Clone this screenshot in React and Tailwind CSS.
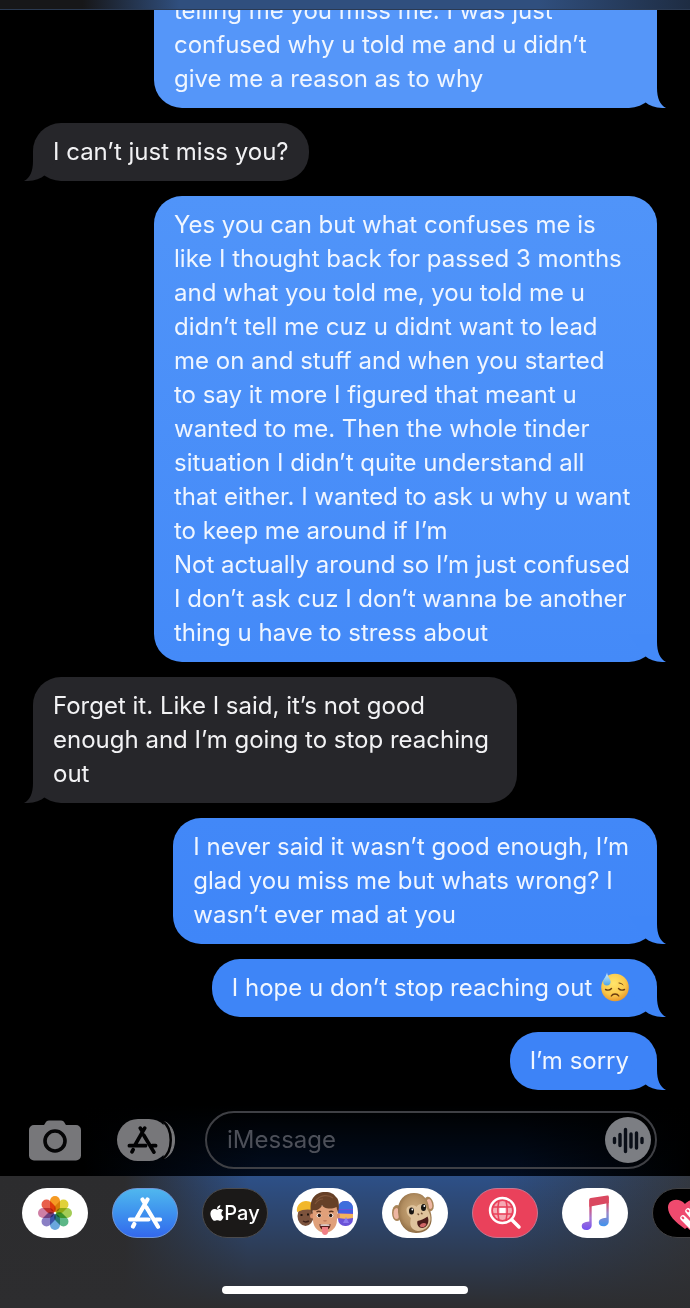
import React from 'react';
import { FaApple } from 'react-icons/fa';

const messages = [
  {
    id: 1,
    mine: true,
    color: 'bg-[#5596f9] text-[#5596f9]',
    size: 'w-full px-5',
    text: 'telling me you miss me. I was just\nconfused why u told me and u didn’t\ngive me a reason as to why',
  },
  {
    id: 2,
    mine: false,
    color: 'bg-[#26262a] text-[#26262a]',
    size: 'px-5',
    text: 'I can’t just miss you?',
  },
  {
    id: 3,
    mine: true,
    color: 'bg-linear-to-b from-[#5094f9] to-[#448af8] text-[#448af8]',
    size: 'w-full px-5',
    text: 'Yes you can but what confuses me is\nlike I thought back for passed 3 months\nand what you told me, you told me u\ndidn’t tell me cuz u didnt want to lead\nme on and stuff and when you started\nto say it more I figured that meant u\nwanted to me. Then the whole tinder\nsituation I didn’t quite understand all\nthat either. I wanted to ask u why u want\nto keep me around if I’m\nNot actually around so I’m just confused\nI don’t ask cuz I don’t wanna be another\nthing u have to stress about',
  },
  {
    id: 4,
    mine: false,
    color: 'bg-[#26262a] text-[#26262a]',
    size: 'pl-5 pr-7',
    text: 'Forget it. Like I said, it’s not good\nenough and I’m going to stop reaching\nout',
  },
  {
    id: 5,
    mine: true,
    color: 'bg-linear-to-b from-[#4288f8] to-[#3f86f8] text-[#3f86f8]',
    size: 'pl-5 pr-7',
    text: 'I never said it wasn’t good enough, I’m\nglad you miss me but whats wrong? I\nwasn’t ever mad at you',
  },
  {
    id: 6,
    mine: true,
    color: 'bg-[#3e85f7] text-[#3e85f7]',
    size: 'pl-5 pr-7',
    text: 'I hope u don’t stop reaching out ',
    emoji: true,
  },
  { id: 7, mine: true, color: 'bg-[#3d83f7] text-[#3d83f7]', size: 'pl-5 pr-7', text: 'I’m sorry' },
];

const SweatEmoji = () => (
  <svg role="img" aria-label="downcast face with sweat" viewBox="0 0 30 30" className="-mt-1 inline-block size-[30px] align-middle">
    <defs>
      <radialGradient id="face" cx="45%" cy="35%" r="65%">
        <stop offset="0" stopColor="#ffe56b" />
        <stop offset="0.65" stopColor="#fbc84a" />
        <stop offset="1" stopColor="#e99a2d" />
      </radialGradient>
      <linearGradient id="drop" x1="0" y1="0" x2="0" y2="1">
        <stop offset="0" stopColor="#d8f1ff" />
        <stop offset="1" stopColor="#4aa5ea" />
      </linearGradient>
    </defs>
    <circle cx="16" cy="15.5" r="13.8" fill="url(#face)" />
    <g fill="none" stroke="#6a3d10" strokeLinecap="round" strokeWidth="1.4">
      <path d="M6.5 17.5c2.200 1 4.600.5 6-1M19.500 16.500c1.400 1.500 3.800 2 6 1" />
      <path d="M12.300 24c1.500-2.600 6-2.600 7.500 0" />
      <path d="M20 11c1.800.2 3 .8 4 1.800" strokeWidth="1" />
    </g>
    <path d="M8 .5C8.300 4 11.600 7 11.600 9.800a3.700 3.700 0 0 1-7.400 0C4.200 7 7.600 4 8 .5z" fill="url(#drop)" />
  </svg>
);

const Bubble = ({ message }) => (
  <li
    className={`relative max-w-[503px] shrink-0 rounded-[28px] py-3 ${message.color} ${message.size} ${
      message.mine ? 'self-end' : 'self-start'
    }`}
  >
    <svg
      viewBox="0 0 38 28"
      aria-hidden="true"
      className={`absolute bottom-0 h-7 w-[38px] ${message.mine ? '-right-2.5' : '-left-2.5 -scale-x-100'}`}
    >
      <path d="M28 0V8C28 18 31 25 37 28C28 28.300 21 26.500 16 22L0 0Z" fill="currentColor" />
    </svg>
    <p
      className={`relative whitespace-pre-line text-2xl leading-[34px] ${
        message.mine ? 'text-[#f0f6ff]' : 'text-[#f2f2f4]'
      }`}
    >
      {message.text}
      {message.emoji && <SweatEmoji />}
    </p>
  </li>
);

const StoreGlyph = ({ className }) => (
  <svg viewBox="0 0 34 32" className={className} fill="none" stroke="currentColor" strokeLinecap="round" strokeWidth="4.2">
    <path d="M14.500 2.500 17 6.800M19.500 2.500 8 22.500M18.500 10.500 30 29.800M6.300 27 5 29.500M2 22.500H20.500M28 22.500H32" />
  </svg>
);

const CameraIcon = () => (
  <svg viewBox="0 0 52 41" className="h-[41px] w-[52px]">
    <path
      d="M5 5h9c1 0 1.500-.5 2-1.500C17 1.500 18 .5 20 .5h12c2 0 3 1 4 3 .5 1 1 1.500 2 1.500h9a5 5 0 0 1 5 5v25.500a5 5 0 0 1-5 5H5a5 5 0 0 1-5-5V10a5 5 0 0 1 5-5z"
      fill="#77777a"
    />
    <circle cx="26" cy="21" r="10" fill="none" stroke="#050506" strokeWidth="3.6" />
  </svg>
);

const AppsIcon = () => (
  <span className="relative block h-[42px] w-[59px]">
    <svg viewBox="0 0 59 42" className="h-full w-full">
      <path d="M47 2.500C61 7 61 35 47 39.500Z" fill="#77777a" stroke="#77777a" />
      <rect width="53" height="42" rx="21" fill="#77777a" />
      <path d="M45.500 2C56.500 10 56.500 32 45.500 40" fill="none" stroke="#020203" strokeWidth="2.5" />
    </svg>
    <StoreGlyph className="absolute left-2.5 top-[7px] h-7 w-[31px] text-[#020203]" />
  </span>
);

const AudioIcon = () => (
  <svg viewBox="0 0 46 46" className="size-[46px]">
    <circle cx="23" cy="23" r="23" fill="#7c7e83" />
    <path
      d="M9.500 21.500v4M15 17.500v11M20.500 12.500v22M26 17v13M31.500 16v15M37 21.500v4"
      stroke="#0b0f18"
      strokeWidth="3.4"
      strokeLinecap="round"
    />
  </svg>
);

const petals = ['#f59a23', '#e0d13a', '#a3cc55', '#5cb787', '#6aa7dd', '#8a7fc4', '#cf7fa5', '#e85f4c'];

const PhotosIcon = () => (
  <svg viewBox="0 0 36 36" className="size-9">
    {petals.map((color, i) => (
      <rect
        key={color}
        x="13"
        y="1"
        width="10"
        height="16"
        rx="5"
        fill={color}
        transform={`rotate(${i * 45} 18 18)`}
        className="mix-blend-multiply"
      />
    ))}
  </svg>
);

const ApplePay = () => (
  <span className="flex items-center text-xl font-medium text-white">
    <FaApple className="h-[18px] w-3.5" />
    Pay
  </span>
);

const MemojiIcon = () => (
  <svg viewBox="0 0 66 50" className="h-full w-full">
    <ellipse cx="13.500" cy="28" rx="8" ry="10" fill="#7c533d" />
    <path d="M5 24c-1-7 4-11 9-11s8 3 8 9c-6-1-11-1-17 2z" fill="#f2b72c" />
    <path d="M8.500 27h2M15 26.500h2" stroke="#20140e" strokeWidth="2" />
    <path d="M11 33c2 1.500 4 1 6 0" stroke="#3e2118" strokeWidth="1.5" fill="none" />
    <rect x="46" y="13" width="15" height="25" rx="7" fill="#6a52d8" />
    <path d="M46 21c0-5 3-8 7.500-8s7.500 3 7.500 8z" fill="#3e6fdc" />
    <path d="M46 22h15v3H46z" fill="#405fe0" />
    <path d="M46 25.500l15 .5v4l-7 1-8-1z" fill="#f2b35a" />
    <path d="M54 29l-3 6h6z" fill="#8a79ee" />
    <circle cx="20.500" cy="28" r="2.5" fill="#d98f6b" />
    <circle cx="45.500" cy="28" r="2.5" fill="#d98f6b" />
    <path d="M21 18h24v14c0 8-7 13-12 13s-12-5-12-13z" fill="#e0a07a" />
    <path d="M19.500 26C16 12 23 4 33 4c6 0 9 2 11 5 4 3 3 11 2 17l-1.500-7C38 22 31 20 30 17c-1 4-6 6-9 5z" fill="#664027" />
    <path d="M24 12c5-5 12-6 17-2M23 16c2-3 5-5 8-5" stroke="#80563a" strokeWidth="1.2" fill="none" />
    <path d="M24.500 24c1.500-1 3-1 4.500 0M37 24c1.500-1 3-1 4.500 0" stroke="#5d351f" strokeWidth="1.3" fill="none" />
    <ellipse cx="27" cy="27.500" rx="2.4" ry="2" fill="#fff" />
    <ellipse cx="39" cy="27.500" rx="2.4" ry="2" fill="#fff" />
    <circle cx="27.300" cy="27.500" r="1.7" fill="#26150f" />
    <circle cx="38.700" cy="27.500" r="1.7" fill="#26150f" />
    <path d="M31.500 32.500q1.500 1 3 0" stroke="#b97456" strokeWidth="1.2" fill="none" />
    <path d="M27.500 36c3 1 8 1 11 0 0 4-2 6-5.500 6s-5.500-2-5.500-6z" fill="#59201d" />
    <path d="M28.500 36.500h9v1.300h-9z" fill="#fff" />
    <path d="M30 39h6v5c0 4-6 4-6 0z" fill="#ef7f86" />
  </svg>
);

const MonkeyIcon = () => (
  <svg viewBox="0 0 66 50" className="h-full w-full">
    <defs>
      <radialGradient id="fur" cx="50%" cy="45%" r="55%">
        <stop offset="0" stopColor="#cfae80" />
        <stop offset="0.7" stopColor="#b18d60" />
        <stop offset="1" stopColor="#8f6d45" />
      </radialGradient>
    </defs>
    <ellipse cx="15" cy="25" rx="5" ry="8" fill="#a98458" />
    <ellipse cx="14.500" cy="25.500" rx="3" ry="5.5" fill="#eeb6a2" />
    <ellipse cx="47" cy="16" rx="4.5" ry="7.5" fill="#a98458" transform="rotate(-15 47 16)" />
    <ellipse cx="47.500" cy="16" rx="2.500" ry="5" fill="#eeb6a2" transform="rotate(-15 47.5 16)" />
    <path d="M16 24C15 12 23 5 32 5s14 6 15 15c2 4 3 8 2.500 13-1 8-7 12-15.500 12-11 0-17-9-18-21z" fill="url(#fur)" />
    <path d="M24.500 22c0-5 8-6 10-3 2-4 9-4 10 1 2 3 4.500 7 4 12-1 7-6 11-12.500 11-7-1-9-6-7-13-3-2-4.500-5-4.500-8z" fill="#dfc39c" />
    <ellipse cx="29.500" cy="23" rx="2.500" ry="3.500" fill="#171412" />
    <ellipse cx="41.500" cy="19.500" rx="2.500" ry="3.500" fill="#171412" />
    <circle cx="30.300" cy="21.500" r="0.9" fill="#fff" />
    <circle cx="42.300" cy="18" r="0.9" fill="#fff" />
    <path d="M36 26l.5.5M39.500 25.200l.5.5" stroke="#795437" strokeWidth="1.5" strokeLinecap="round" />
    <path d="M35.500 33c4-.5 7-2.500 10-4.500 2.500 5-.5 11-5 11.500-4 0-6-3.500-5-7z" fill="#4b1b19" />
    <path d="M37.500 38c1-3 5-4 7-2-1 3-4 4.500-7 2z" fill="#d06665" />
  </svg>
);

const ImagesIcon = () => (
  <svg viewBox="0 0 34 34" className="size-[34px]" fill="none" stroke="#fff">
    <circle cx="14.500" cy="14.500" r="12.5" strokeWidth="2.4" />
    <circle cx="14.500" cy="14.500" r="9.5" fill="#f6a9b3" stroke="none" />
    <path d="M11.500 11.500h6v6h-6z" fill="#fff" stroke="none" />
    <path d="M5 11h19M5 18h19M11 5c-1.500 6-1.500 13 0 19M18 5c1.500 6 1.500 13 0 19" stroke="#e8405a" strokeWidth="1.5" />
    <path d="M24 24l7 7" strokeWidth="3.5" strokeLinecap="round" />
  </svg>
);

const MusicIcon = () => (
  <svg viewBox="0 0 30 38" className="h-9 w-[30px]">
    <defs>
      <linearGradient id="stemLeft" x1="0" y1="0" x2="0" y2="1">
        <stop offset="0.2" stopColor="#d94a63" />
        <stop offset="0.6" stopColor="#a979d0" />
        <stop offset="1" stopColor="#7451f2" />
      </linearGradient>
      <linearGradient id="stemRight" x1="0" y1="0" x2="0" y2="1">
        <stop offset="0.2" stopColor="#d94a63" />
        <stop offset="0.55" stopColor="#9a86c9" />
        <stop offset="1" stopColor="#3f94ee" />
      </linearGradient>
    </defs>
    <path d="M9 5h2.500v27c0 3-2.500 5-5.500 5-3.300 0-5-1.700-5-4 0-3 2.500-4.500 8-5z" fill="url(#stemLeft)" />
    <path d="M27 2h2.500v26c0 3-2.500 5-5.500 5-3.300 0-5-1.700-5-4 0-3 2.500-4.500 8-5z" fill="url(#stemRight)" />
    <path d="M9 5c0-1 .5-1.600 1.500-1.800L28 .5c1-.2 1.500.3 1.500 1.200V8.500L9 12.500z" fill="#da4860" />
  </svg>
);

const HeartIcon = () => (
  <svg viewBox="0 0 36 34" className="h-[34px] w-9">
    <path d="M18 33C8 26 1 19 1 11.500 1 3 12 1 18 8 24 1 35 3 35 11.500 35 19 28 26 18 33z" fill="#ef4a6e" />
    <path d="M16 22l10 10M21 15l10 12" stroke="#ef4a6e" strokeWidth="7.5" strokeLinecap="round" />
    <path d="M16 22l10 10M21 15l10 12" stroke="#fff" strokeWidth="5.5" strokeLinecap="round" />
    <path d="M15.500 21.500l.8.8M20.500 14.500l.8.8" stroke="#ef4a6e" strokeWidth="2" strokeLinecap="round" />
  </svg>
);

const apps = [
  { name: 'Photos', style: 'bg-white', icon: <PhotosIcon /> },
  {
    name: 'App Store',
    style: 'border border-[#6f97d8] bg-linear-to-b from-[#50b7ee] to-[#3468ec] text-white',
    icon: <StoreGlyph className="h-8 w-[34px]" />,
  },
  { name: 'Apple Pay', style: 'border border-[#4b4b4d] bg-[#1b1918]', icon: <ApplePay /> },
  { name: 'Memoji Stickers', style: 'bg-white', icon: <MemojiIcon /> },
  { name: 'Animoji', style: 'bg-white', icon: <MonkeyIcon /> },
  { name: 'Images', style: 'border border-[#c67791] bg-[#ea415b]', icon: <ImagesIcon /> },
  { name: 'Music', style: 'bg-white', icon: <MusicIcon /> },
  { name: 'Digital Touch', style: 'border border-[#424244] bg-black', icon: <HeartIcon /> },
];

const Composer = () => (
  <div className="shrink-0 bg-[linear-gradient(to_right,#000_12%,#020d20_38%,#020d20_75%,#000_100%)]">
    <form
      onSubmit={(e) => e.preventDefault()}
      className="flex items-center bg-linear-to-b from-black to-transparent pb-[7px] pl-[29px] pr-[33px] pt-1.5"
    >
      <button type="button" aria-label="Camera" className="mr-9">
        <CameraIcon />
      </button>
      <button type="button" aria-label="Apps" className="mr-[29px]">
        <AppsIcon />
      </button>
      <div className="flex h-[58px] min-w-0 flex-1 items-center rounded-full border-2 border-[#3f4045] pl-5 pr-1">
        <input
          type="text"
          aria-label="iMessage"
          placeholder="iMessage"
          className="min-w-0 flex-1 bg-transparent text-2xl text-white outline-none placeholder:text-[#4d5059]"
        />
        <button type="button" aria-label="Record audio" className="shrink-0">
          <AudioIcon />
        </button>
      </div>
    </form>
  </div>
);

const AppDrawer = () => (
  <nav className="shrink-0 bg-[linear-gradient(to_right,#2c2c2e_18%,#2d5088_36%,#2d5088_72%,#333841_100%)]">
    <div className="flex h-[132px] flex-col justify-between bg-linear-to-b from-transparent to-[#2d2d2f] pb-3.5 pt-3">
      <ul className="flex gap-6 overflow-hidden pl-[22px]">
        {apps.map((app) => (
          <li key={app.name} className="shrink-0">
            <button
              type="button"
              aria-label={app.name}
              className={`flex h-[50px] w-[66px] items-center justify-center overflow-hidden rounded-full ${app.style}`}
            >
              {app.icon}
            </button>
          </li>
        ))}
      </ul>
      <div className="h-2 w-[246px] self-center rounded-full bg-white" />
    </div>
  </nav>
);

const App = () => {
  return (
    <div className="flex h-screen flex-col overflow-hidden bg-black font-['Inter',sans-serif]">
      <header className="h-2.5 shrink-0 border-b border-[#2b3a52] bg-[linear-gradient(to_right,#171719_12%,#304f7e_26%,#304f7e_78%,#1e2c42_100%)]" />
      <main className="flex min-h-0 flex-1 flex-col overflow-hidden">
        <ul className="flex min-h-0 flex-1 flex-col justify-end gap-[15px] px-[33px] pb-[15px]">
          {messages.map((message) => (
            <Bubble key={message.id} message={message} />
          ))}
        </ul>
      </main>
      <Composer />
      <AppDrawer />
    </div>
  );
};

export default App;
